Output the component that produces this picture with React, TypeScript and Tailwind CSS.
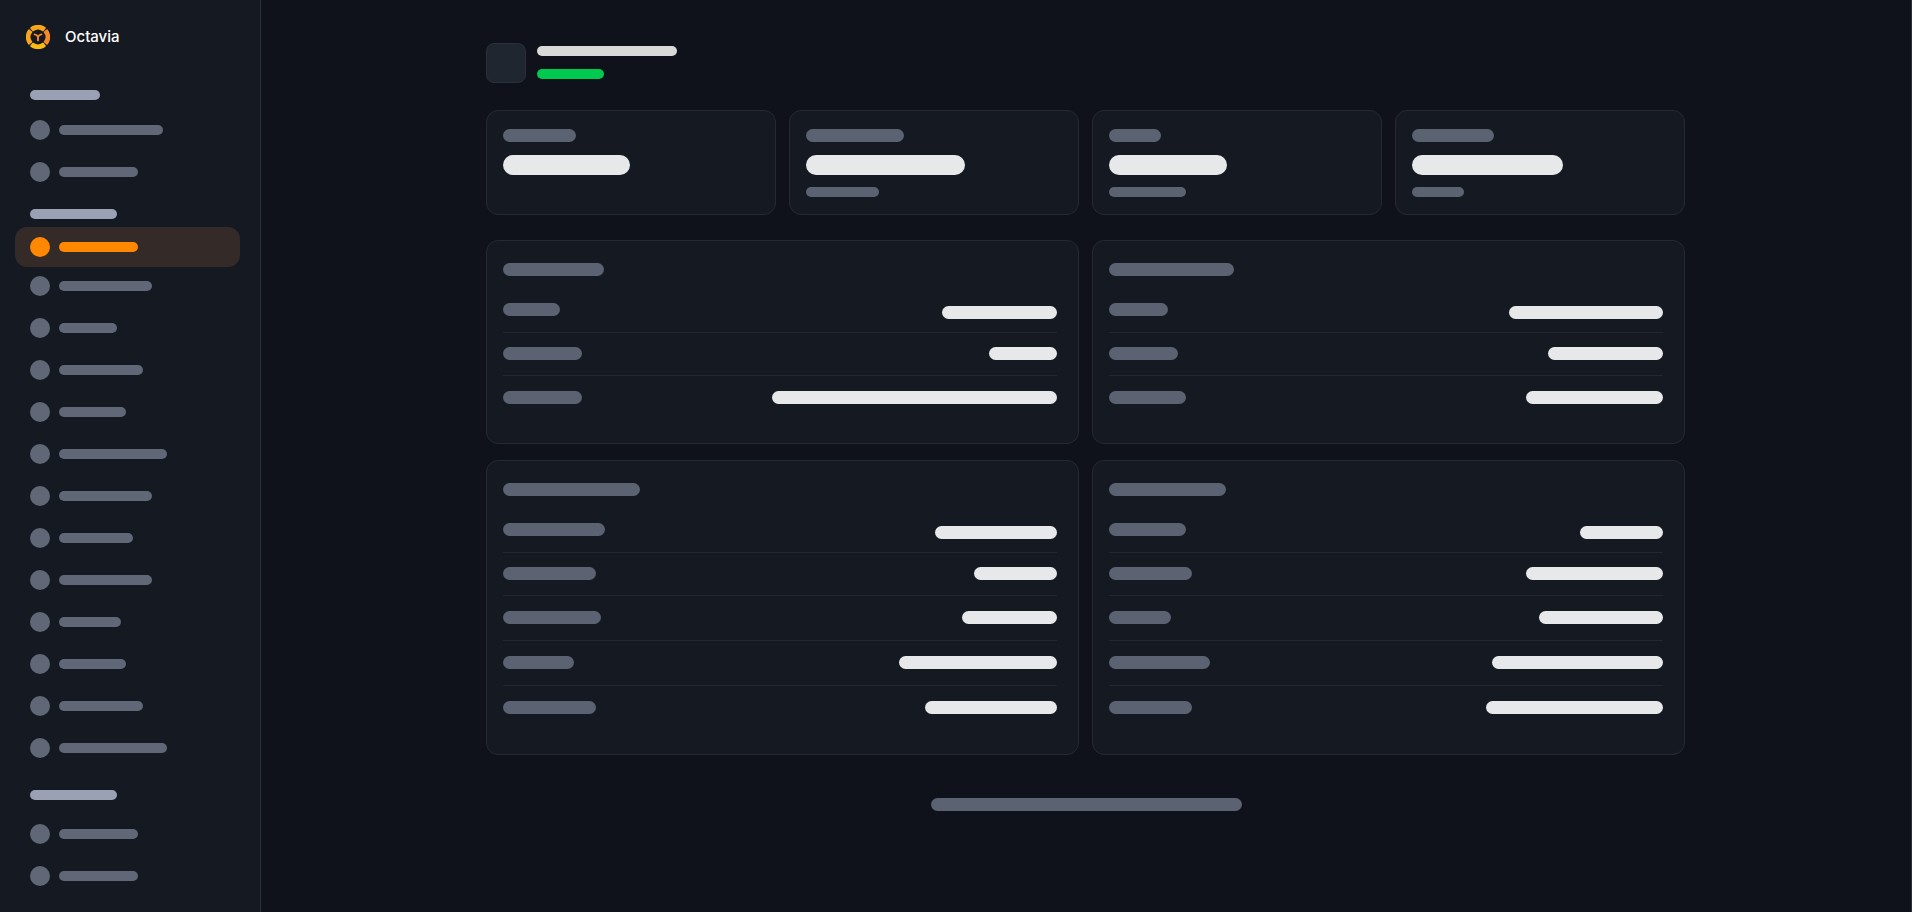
import React from "react";

const sections = [
  { label: "w-[70px]", gap: "mt-[11px]", top: "pt-[41px]", active: -1, items: ["w-[104px]", "w-[79px]"] },
  {
    label: "w-[87px]",
    gap: "mt-2",
    top: "pt-[18px]",
    active: 0,
    items: [
      "w-[79px]", "w-[93px]", "w-[58px]", "w-[84px]", "w-[67px]", "w-[108px]", "w-[93px]",
      "w-[74px]", "w-[93px]", "w-[62px]", "w-[67px]", "w-[84px]", "w-[108px]",
    ],
  },
  { label: "w-[87px]", gap: "mt-[15px]", top: "pt-[23px]", active: -1, items: ["w-[79px]", "w-[79px]"] },
];

const stats = [
  { label: "w-[73px]", value: "w-[127px]", note: "" },
  { label: "w-[98px]", value: "w-[159px]", note: "w-[73px]" },
  { label: "w-[52px]", value: "w-[118px]", note: "w-[77px]" },
  { label: "w-[82px]", value: "w-[151px]", note: "w-[52px]" },
];

const panels = [
  {
    title: "w-[101px]",
    rows: [["w-[57px]", "w-[115px]"], ["w-[79px]", "w-[68px]"], ["w-[79px]", "w-[285px]"]],
  },
  {
    title: "w-[125px]",
    rows: [["w-[59px]", "w-[154px]"], ["w-[69px]", "w-[115px]"], ["w-[77px]", "w-[137px]"]],
  },
  {
    title: "w-[137px]",
    rows: [
      ["w-[102px]", "w-[122px]"], ["w-[93px]", "w-[83px]"], ["w-[98px]", "w-[95px]"],
      ["w-[71px]", "w-[158px]"], ["w-[93px]", "w-[132px]"],
    ],
  },
  {
    title: "w-[117px]",
    rows: [
      ["w-[77px]", "w-[83px]"], ["w-[83px]", "w-[137px]"], ["w-[62px]", "w-[124px]"],
      ["w-[101px]", "w-[171px]"], ["w-[83px]", "w-[177px]"],
    ],
  },
];

function Bar({ className }: { className: string }) {
  return <div className={`rounded-full ${className}`} />;
}

function Logo() {
  const segment = "M5 3A11.4 11.4 0 0 1 19 3L17 5.5A8.2 8.2 0 0 0 7 5.5Z";
  return (
    <svg viewBox="0 0 24 24" className="size-6" aria-hidden="true">
      <g strokeWidth="1.6" strokeLinejoin="round">
        <path d={segment} fill="#fba51a" stroke="#fba51a" />
        <path d={segment} fill="#f98a25" stroke="#f98a25" transform="rotate(90 12 12)" />
        <path d={segment} fill="#fdbc12" stroke="#fdbc12" transform="rotate(180 12 12)" />
        <path d={segment} fill="#fba51a" stroke="#fba51a" transform="rotate(270 12 12)" />
      </g>
      <path
        d="M8.6 9.4C10 9.6 11.2 10.4 12 11.8C12.8 10.4 14 9.6 15.4 9.4M12 11.8V15.4"
        fill="none"
        stroke="#f98a25"
        strokeWidth="1.9"
        strokeLinecap="round"
      />
    </svg>
  );
}

function Sidebar() {
  return (
    <aside className="w-[261px] shrink-0 border-r border-[#2d3037] bg-[#151921] pb-4">
      <a href="#" className="flex items-center gap-[15px] pt-[25px] pl-[26px]">
        <Logo />
        <span className="text-[15px] leading-6 font-medium text-white">Octavia</span>
      </a>
      <nav className="pr-5 pl-[15px]">
        {sections.map((s, i) => (
          <section key={i} className={s.top}>
            <Bar className={`ml-[15px] h-[10px] bg-[#9ba1b5] ${s.label}`} />
            <ul className={`flex flex-col gap-1 ${s.gap}`}>
              {s.items.map((w, j) => {
                const active = s.active === j;
                return (
                  <li
                    key={j}
                    className={`flex items-center gap-[9px] rounded-xl px-[15px] ${active ? "-mb-1 h-10 bg-[#342a27]" : "h-[38px]"}`}
                  >
                    <Bar className={`size-5 ${active ? "bg-[#ff8800]" : "bg-[#606776]"}`} />
                    <Bar className={`h-[10px] ${w} ${active ? "bg-[#ff8800]" : "bg-[#606776]"}`} />
                  </li>
                );
              })}
            </ul>
          </section>
        ))}
      </nav>
    </aside>
  );
}

function rowSpacing(index: number) {
  if (index === 0) return "pb-[13px]";
  if (index === 1) return "pt-[14px] pb-[15px]";
  if (index < 4) return "pt-[15px] pb-4";
  return "pt-[15px] pb-[17px]";
}

function Panel({ title, rows }: { title: string; rows: string[][] }) {
  return (
    <section className="rounded-xl border border-[#262930] bg-[#151921] pt-[22px] pr-[21px] pb-[23px] pl-4">
      <Bar className={`mb-[27px] h-[13px] bg-[#5b6272] ${title}`} />
      {rows.map(([label, value], i) => (
        <div
          key={i}
          className={`flex justify-between border-[#242732] ${rowSpacing(i)} ${i < rows.length - 1 ? "border-b" : ""}`}
        >
          <Bar className={`h-[13px] bg-[#5b6272] ${label}`} />
          <Bar className={`h-[13px] bg-[#e7e8ea] ${value} ${i === 0 ? "mt-[3px]" : ""}`} />
        </div>
      ))}
    </section>
  );
}

export default function App() {
  return (
    <div className="flex min-h-screen bg-[#0f121a] font-['Inter',sans-serif]">
      <Sidebar />
      <main className="min-w-0 flex-1 border-r border-[#2d3037] pt-[43px] pb-10">
        <div className="mx-auto max-w-[1200px] pr-px">
          <header className="flex items-start gap-[11px]">
            <div className="size-10 rounded-lg border border-[#2b2f3a] bg-[#202630]" />
            <div className="flex flex-col gap-[13px] pt-[3px]">
              <Bar className="h-[10px] w-[140px] bg-[#d9d9d9]" />
              <Bar className="h-[10px] w-[67px] bg-[#00c950]" />
            </div>
          </header>
          <div className="mt-[27px] grid grid-cols-4 gap-[13px]">
            {stats.map((s, i) => (
              <section key={i} className="rounded-xl border border-[#262930] bg-[#151921] px-4 pt-[18px] pb-[17px]">
                <Bar className={`h-[13px] bg-[#5b6272] ${s.label}`} />
                <Bar className={`mt-[13px] h-5 bg-[#e7e8ea] ${s.value}`} />
                {s.note && <Bar className={`mt-3 h-[10px] bg-[#5b6272] ${s.note}`} />}
              </section>
            ))}
          </div>
          <div className="mt-[25px] grid grid-cols-2 gap-x-[13px] gap-y-4">
            {panels.map((p, i) => (
              <Panel key={i} title={p.title} rows={p.rows} />
            ))}
          </div>
        </div>
        <footer className="pt-[43px]">
          <Bar className="mx-auto h-[13px] w-[311px] bg-[#5b6272]" />
        </footer>
      </main>
    </div>
  );
}
